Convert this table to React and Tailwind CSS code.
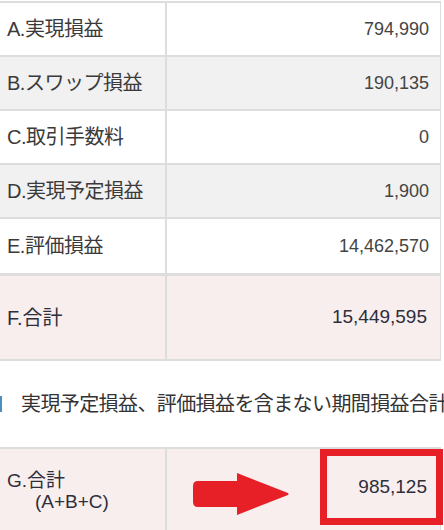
import React from 'react';

const rows = [
  { label: 'A.実現損益', value: '794,990', bg: 'bg-white' },
  { label: 'B.スワップ損益', value: '190,135', bg: 'bg-[#f1f1f1]' },
  { label: 'C.取引手数料', value: '0', bg: 'bg-white' },
  { label: 'D.実現予定損益', value: '1,900', bg: 'bg-[#f1f1f1]' },
  { label: 'E.評価損益', value: '14,462,570', bg: 'bg-white', last: true },
];

const font = { fontFamily: '"Liberation Sans", "Noto Sans CJK JP", sans-serif' };

const Arrow = () => (
  <svg width="96" height="42" viewBox="0 0 96 42" className="absolute left-[193px] top-[24px]">
    <path
      d="M5 8 H44 V0 L95 20 Q96 21 95 22 L44 42 V34 H5 Q0 34 0 29 V13 Q0 8 5 8 Z"
      fill="#e71f27"
    />
  </svg>
);

export default function App() {
  return (
    <div className="w-[444px] h-[530px] overflow-hidden bg-white pt-px" style={font}>
      {/* upper table */}
      <div className="w-[441px] border-t-2 border-r border-[#dddddd]">
        {rows.map((r, i) => (
          <div
            key={i}
            className={`flex border-[#dddddd] ${r.bg} ${r.last ? 'h-[57px] border-b-[3px]' : 'h-[54px] border-b-2'}`}
          >
            <div className="w-[167px] shrink-0 border-r-2 border-[#dddddd] flex items-center pl-[7px] text-[20px] text-[#3a3a3a] tracking-[-0.5px]">
              {r.label}
            </div>
            <div className="flex-1 flex items-center justify-end pr-[11px] text-[18px] text-[#444]">
              {r.value}
            </div>
          </div>
        ))}
        <div className="flex h-[85px] bg-[#f9eeee] border-b-2 border-[#dddddd]">
          <div className="w-[167px] shrink-0 border-r-2 border-[#dddddd] flex items-center pl-[7px] text-[20px] text-[#2e2e3c]">
            F.合計
          </div>
          <div className="flex-1 flex items-center justify-end pr-[13px] text-[19px] text-[#2e2e3c]">
            15,449,595
          </div>
        </div>
      </div>

      {/* heading */}
      <div className="relative h-[86px] flex items-center whitespace-nowrap">
        <span className="absolute left-0 top-[35px] w-[2px] h-[16px] bg-[#4a8fc0]" />
        <span className="pl-[21px] text-[20px] text-[#333] tracking-[-0.6px]">
          実現予定損益、評価損益を含まない期間損益合計
        </span>
      </div>

      {/* lower table */}
      <div className="relative w-[441px] border-t-2 border-r border-[#dddddd] bg-[#f9eeee]">
        <div className="flex h-[82px]">
          <div className="w-[167px] shrink-0 border-r-2 border-[#dddddd] flex flex-col justify-center pl-[7px] text-[19px] text-[#2e2e3c] leading-[21px] pt-[2px]">
            <span>G.合計</span>
            <span className="pl-[28px]">(A+B+C)</span>
          </div>
          <div className="flex-1 flex items-center justify-end pr-[13px] pb-[6px] text-[19px] text-[#2e2e3c]">
            985,125
          </div>
        </div>
        <Arrow />
        <div className="absolute left-[320px] top-0 w-[123px] h-[76px] border-[7px] border-[#e71f27] pointer-events-none" />
      </div>
    </div>
  );
}
